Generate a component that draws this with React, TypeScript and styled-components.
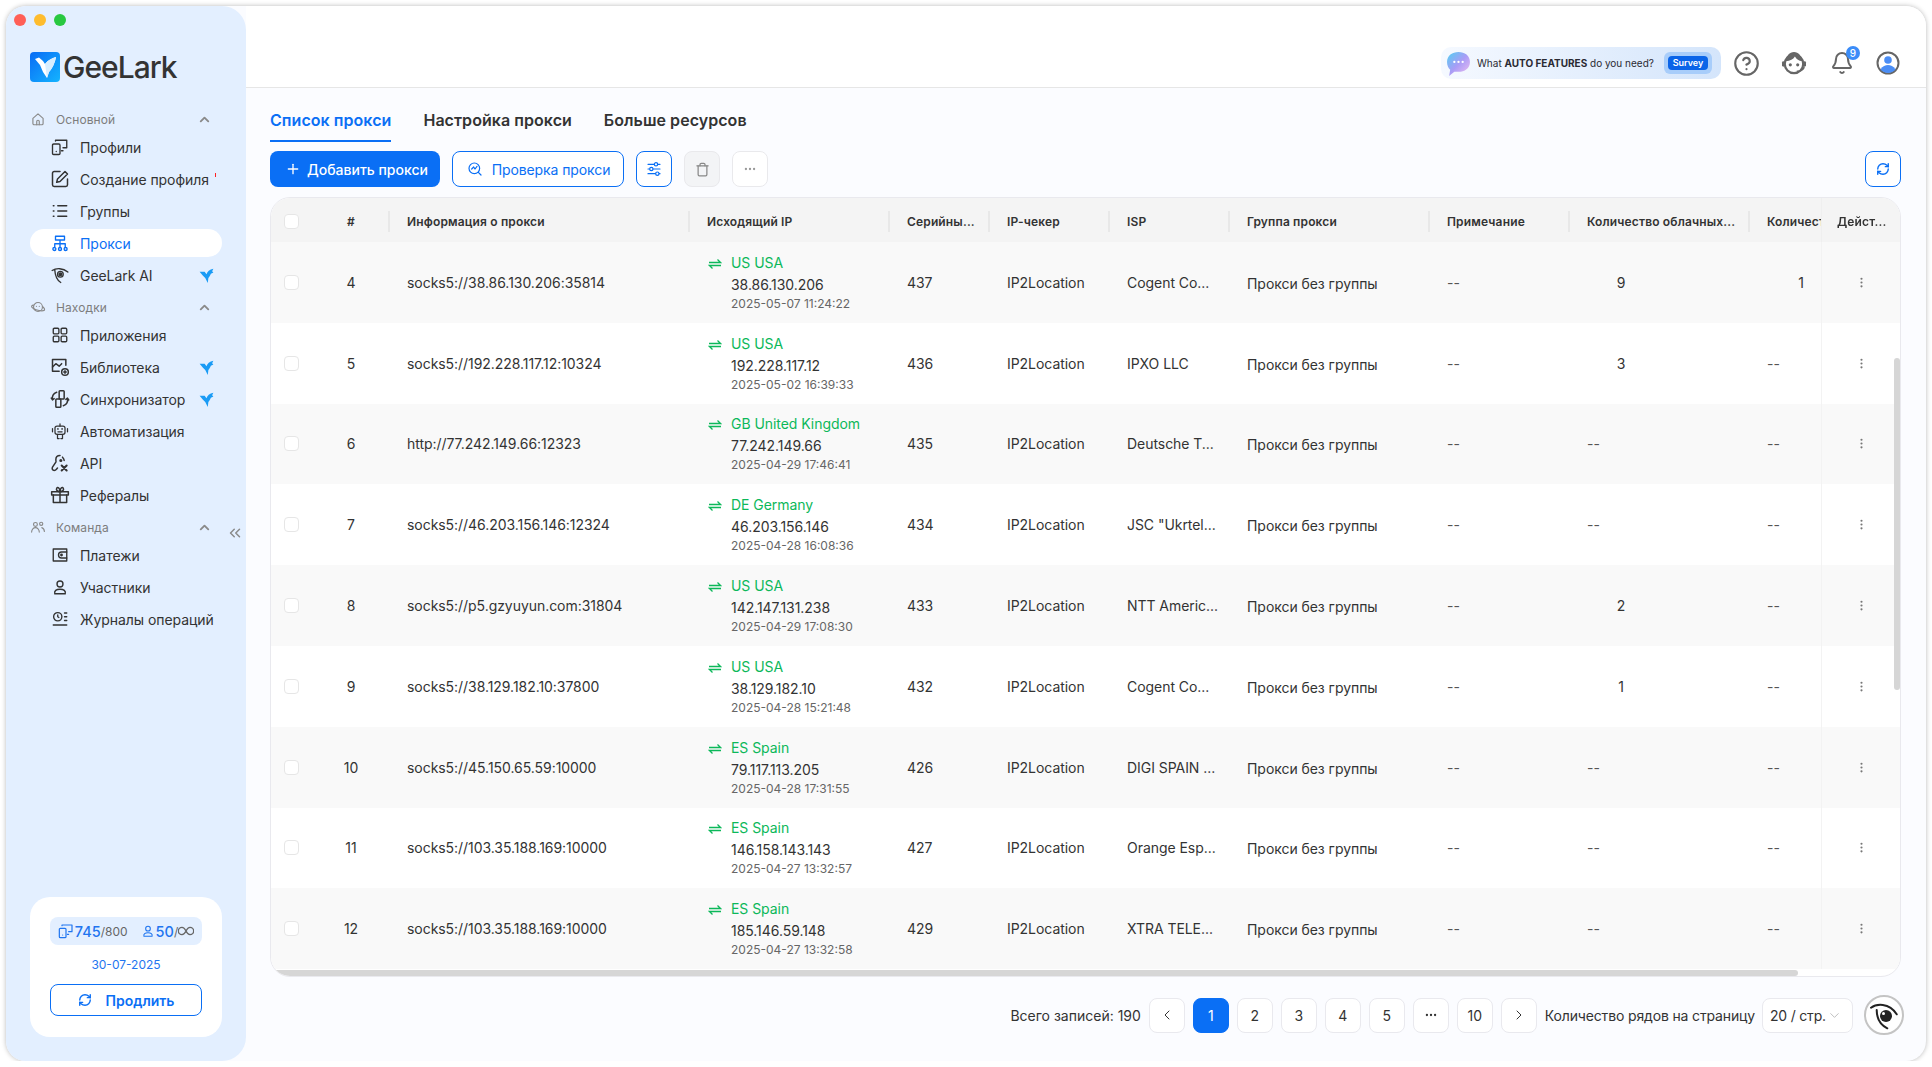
import React from "react";
import styled, { createGlobalStyle } from "styled-components";
import { ChevronLeft, ChevronRight, ChevronDown, ChevronUp, ChevronsLeft, CircleHelp, Bell, Ellipsis, EllipsisVertical, Plus, RefreshCw, Trash } from "lucide-react";

const GlobalStyle = createGlobalStyle`
  html, body {
    margin: 0;
    padding: 0;
    background: #fff;
    font-family: Inter, "Noto Sans", sans-serif;
    color: #333;
  }
  * { box-sizing: border-box; }
`;

type IconProps = { size?: number };

const Stroke = ({ size = 18, children }: IconProps & { children: React.ReactNode }) => (
  <svg width={size} height={size} viewBox="0 0 24 24" fill="none" stroke="currentColor" strokeWidth={1.8} strokeLinecap="round" strokeLinejoin="round">
    {children}
  </svg>
);

const Bird = ({ size = 15 }: IconProps) => (
  <svg width={size} height={size} viewBox="0 0 24 24" fill="#1a9bf5">
    <path d="M1 6h8l3 4c1-4 5-8 11-9l-2 4 2 2-4 2c-1 3-3 5-4 7l-1 8-4-8-4-4z" />
  </svg>
);

const HomeIcon = () => <Stroke><path d="M4 11l8-7 8 7v8a2 2 0 0 1-2 2H6a2 2 0 0 1-2-2z" /><path d="M10 21v-5a2 2 0 0 1 4 0v5" /></Stroke>;
const DevicesIcon = ({ size = 18 }: IconProps) => <Stroke size={size}><rect x="2" y="8" width="10" height="14" rx="1.500" /><path d="M6 4V3h15v10h-5M14 17h2" /><path d="M7 18h.01" /></Stroke>;
const EditIcon = () => <Stroke size={20}><path d="M12 3H5a2 2 0 0 0-2 2v14a2 2 0 0 0 2 2h14a2 2 0 0 0 2-2v-7" /><path d="M18 3l3 3-9 9-4 1 1-4z" /></Stroke>;
const ListIcon = () => <Stroke><path d="M9 5h12M9 12h12M9 19h12" /><path d="M3 5h2M3 12h2M3 19h2" strokeDasharray="1 1.500" /></Stroke>;
const ProxyIcon = () => <Stroke><path d="M6 3h12v5H6zM12 8v5M5 17v-4h14v4" /><circle cx="4.500" cy="20" r="2" /><circle cx="12" cy="20" r="2" /><circle cx="19.500" cy="20" r="2" /><path d="M12 13v5" /></Stroke>;
const EyeBirdIcon = () => <Stroke><path d="M1.500 6C7 2.500 16 2.500 22.500 8M5 5c.5 8 3 14 8 17" /><circle cx="12.500" cy="11" r="3.800" /><circle cx="12.500" cy="11" r="1.800" fill="currentColor" /></Stroke>;
const PlanetIcon = () => <Stroke><circle cx="12" cy="12" r="7" /><path d="M5 9C2 9 1 11 3 13s9 5 15 5 5-3 2-6" /><path d="M9.500 11h.01M14 11h.01" /></Stroke>;
const GridIcon = () => <Stroke><rect x="3" y="3" width="7.500" height="7.500" rx="1.500" /><rect x="13.500" y="3" width="7.500" height="7.500" rx="1.500" /><rect x="3" y="13.500" width="7.500" height="7.500" rx="1.500" /><rect x="13.500" y="13.500" width="7.500" height="7.500" rx="1.500" /></Stroke>;
const LibraryIcon = () => <Stroke size={20}><path d="M11 17H3V3h16v7" /><path d="M3 12l4-4 4 3 3-3" /><circle cx="18" cy="18" r="4" /><path d="M18 16.500v3M16.500 18h3" /></Stroke>;
const SyncIcon = () => <Stroke size={20}><rect x="11" y="2" width="6" height="10" rx="1" /><rect x="7" y="12" width="6" height="10" rx="1" /><path d="M8 4C4 5 2 9 3 13M16 20c4-1 6-5 5-9M3 13l-1.500-2M3 13l2-1.500M21 11l-2 1.500M21 11l1.500 2" /></Stroke>;
const RobotIcon = () => (
  <svg width="20" height="20" viewBox="0 0 24 24" fill="none" stroke="currentColor" strokeWidth="1.500" strokeLinecap="round" strokeLinejoin="round">
    <rect x="6" y="6" width="12" height="10" rx="2.500" />
    <path d="M12 6V3.500M3 9v4M21 9v4M9 16v5h2M15 16v5h-2M9.500 13h5" />
    <path d="M9.500 9.500h.01M14.500 9.500h.01" strokeWidth="2" />
  </svg>
);
const ApiIcon = () => <Stroke size={20}><path d="M12 3c-3 0-5 2-5 5 0 1 .5 2 0 3l-4 6c-1 2 0 4 2 4s3-2 4-3M15 5c1 1 2 2 2 4" /><path d="M14 15l6 6M20 15l-6 6" strokeWidth="2.400" /><circle cx="13" cy="9" r="1" /></Stroke>;
const GiftIcon = () => <Stroke size={20}><rect x="2" y="8" width="20" height="4" /><path d="M4 12v9h16v-9M12 8v13M12 8C9 8 7 6 8 4s4-1 4 4c0-5 3-6 4-4s-1 4-4 4" /></Stroke>;
const TeamIcon = () => <Stroke><circle cx="8" cy="8" r="3" /><path d="M2 20c0-4 3-7 6-7s6 3 6 7" /><circle cx="17" cy="7" r="2.500" /><path d="M18 13c2.500 1 4 3 4 6" /></Stroke>;
const WalletIcon = () => <Stroke><path d="M3 4h18v16H3z" /><path d="M21 8h-7a4 4 0 0 0 0 8h7" /><circle cx="14" cy="12" r="1" /></Stroke>;
const UserIcon = ({ size = 18 }: IconProps) => <Stroke size={size}><circle cx="12" cy="8" r="4" /><path d="M5 21c-1-4 2-6 7-6s8 2 7 6z" /></Stroke>;
const LogsIcon = () => <Stroke><circle cx="9" cy="9" r="5.500" /><path d="M9 6.500V9l1.500 1M18 4h3M18 9h3M18 14h3M3 20h18" /></Stroke>;
const ChartSearchIcon = () => <Stroke size={16}><circle cx="11" cy="11" r="8" /><path d="M17 17l4 4M7 12l3-3 2 3 3-4" /></Stroke>;
const FilterIcon = () => (
  <svg width="16" height="16" viewBox="0 0 24 24" fill="none" stroke="currentColor" strokeWidth="1.800" strokeLinecap="round">
    <path d="M3 5h9M18 5h3M3 12h2M11 12h10M3 19h11M20 19h1" />
    <circle cx="15" cy="5" r="2.500" /><circle cx="8" cy="12" r="2.500" /><circle cx="17" cy="19" r="2.500" />
  </svg>
);
const InfinityIcon = () => <svg width="16" height="10" viewBox="0 0 24 14" fill="none" stroke="currentColor" strokeWidth="2"><path d="M12 7C10 3 8 1.500 6 1.500a5.500 5.500 0 0 0 0 11c2 0 4-1.500 6-5.500s4-5.500 6-5.500a5.500 5.500 0 0 1 0 11c-2 0-4-1.500-6-5.500z" /></svg>;
const SwapIcon = () => <svg width="14" height="12" viewBox="0 0 14 12" fill="none" stroke="currentColor" strokeWidth="1.300"><path d="M1 4.500h11.500L9.500 1.500M13 7.500H1.500l3 3" /></svg>;
const SupportIcon = () => (
  <svg width="26" height="24" viewBox="0 0 28 26" fill="none">
    <ellipse cx="14" cy="14" rx="10" ry="10" fill="#fff" stroke="#666" strokeWidth="2.400" />
    <path d="M5 11c5 0 8-2 10-5 2 3 4 5 8 5-1-6-4-10-9-10S6 5 5 11z" fill="#666" />
    <circle cx="10" cy="15" r="1.700" fill="#666" /><circle cx="18" cy="15" r="1.700" fill="#666" />
    <rect x="1" y="11" width="3" height="6" rx="1.500" fill="#666" /><rect x="24" y="11" width="3" height="6" rx="1.500" fill="#666" />
    <path d="M25 17c0 3-4 5-8 5" stroke="#666" strokeWidth="1.600" />
  </svg>
);
const ProfileIcon = () => (
  <svg width="24" height="24" viewBox="0 0 24 24" fill="none">
    <circle cx="12" cy="12" r="10.500" stroke="#666" strokeWidth="2" />
    <circle cx="12" cy="9" r="3.800" fill="#4a8df5" />
    <path d="M4.500 18.500c2-3.500 5-4.500 7.500-4.500s5.500 1 7.500 4.500A10 10 0 0 1 12 22a10 10 0 0 1-7.500-3.500z" fill="#4a8df5" />
  </svg>
);
const ChatIcon = () => (
  <svg width="25" height="25" viewBox="0 0 24 24">
    <defs>
      <linearGradient id="chatfill" x1="0" y1="0" x2="1" y2="1">
        <stop offset="0" stopColor="#52d0f2" />
        <stop offset=".5" stopColor="#a99cf6" />
        <stop offset="1" stopColor="#f2bff0" />
      </linearGradient>
    </defs>
    <path d="M12 1c6 0 11 3.500 11 9.500S18 20 12 20H8l-5 4 1-6C2 16 1 13.500 1 10.500 1 4.500 6 1 12 1z" fill="url(#chatfill)" />
    <circle cx="8" cy="10.500" r="1.100" fill="#fff" /><circle cx="12" cy="10.500" r="1.100" fill="#fff" /><circle cx="16" cy="10.500" r="1.100" fill="#fff" />
  </svg>
);
const LogoMark = () => (
  <svg width="30" height="30" viewBox="0 0 30 30">
    <defs>
      <linearGradient id="logofill" x1="0" y1="0" x2="1" y2="1">
        <stop offset="0" stopColor="#0a6cf5" />
        <stop offset="1" stopColor="#14b4ff" />
      </linearGradient>
    </defs>
    <rect width="30" height="30" rx="4" fill="url(#logofill)" />
    <path d="M5 7l4-1.500L13 9l2 3c3-4 7-6 11-7-1 6-4 12-7 15l-2 6-4-6-3-7z" fill="#fff" />
    <path d="M15 12c3-4 7-6 11-7-1 6-4 12-7 15l-2 6z" fill="#d8eeff" />
  </svg>
);
const EyeMark = () => (
  <svg width="30" height="30" viewBox="0 0 30 30" fill="none" stroke="#222" strokeWidth="2" strokeLinecap="round">
    <path d="M2 7.700C7 4 20 2 27.700 14.300M7.700 10c0 8 4 15 10.600 18.300" />
    <circle cx="17" cy="16" r="6" fill="#222" stroke="none" />
    <circle cx="14.500" cy="13.500" r="1.500" fill="#fff" stroke="none" />
  </svg>
);

const sections = [
  {
    title: "Основной",
    icon: <HomeIcon />,
    items: [
      { label: "Профили", icon: <DevicesIcon /> },
      { label: "Создание профиля", icon: <EditIcon />, dot: true },
      { label: "Группы", icon: <ListIcon /> },
      { label: "Прокси", icon: <ProxyIcon />, active: true },
      { label: "GeeLark AI", icon: <EyeBirdIcon />, bird: true },
    ],
  },
  {
    title: "Находки",
    icon: <PlanetIcon />,
    items: [
      { label: "Приложения", icon: <GridIcon /> },
      { label: "Библиотека", icon: <LibraryIcon />, bird: true },
      { label: "Синхронизатор", icon: <SyncIcon />, bird: true },
      { label: "Автоматизация", icon: <RobotIcon /> },
      { label: "API", icon: <ApiIcon /> },
      { label: "Рефералы", icon: <GiftIcon /> },
    ],
  },
  {
    title: "Команда",
    icon: <TeamIcon />,
    items: [
      { label: "Платежи", icon: <WalletIcon /> },
      { label: "Участники", icon: <UserIcon /> },
      { label: "Журналы операций", icon: <LogsIcon /> },
    ],
  },
];

const columns = ["Информация о прокси", "Исходящий IP", "Серийны...", "IP-чекер", "ISP", "Группа прокси", "Примечание", "Количество облачных...", "Количест"];

const rows = [
  { n: 4, proxy: "socks5://38.86.130.206:35814", country: "US USA", ip: "38.86.130.206", date: "2025-05-07 11:24:22", serial: 437, isp: "Cogent Co...", cloud: "9", other: "1" },
  { n: 5, proxy: "socks5://192.228.117.12:10324", country: "US USA", ip: "192.228.117.12", date: "2025-05-02 16:39:33", serial: 436, isp: "IPXO LLC", cloud: "3", other: "--" },
  { n: 6, proxy: "http://77.242.149.66:12323", country: "GB United Kingdom", ip: "77.242.149.66", date: "2025-04-29 17:46:41", serial: 435, isp: "Deutsche T...", cloud: "--", other: "--" },
  { n: 7, proxy: "socks5://46.203.156.146:12324", country: "DE Germany", ip: "46.203.156.146", date: "2025-04-28 16:08:36", serial: 434, isp: 'JSC "Ukrtel...', cloud: "--", other: "--" },
  { n: 8, proxy: "socks5://p5.gzyuyun.com:31804", country: "US USA", ip: "142.147.131.238", date: "2025-04-29 17:08:30", serial: 433, isp: "NTT Americ...", cloud: "2", other: "--" },
  { n: 9, proxy: "socks5://38.129.182.10:37800", country: "US USA", ip: "38.129.182.10", date: "2025-04-28 15:21:48", serial: 432, isp: "Cogent Co...", cloud: "1", other: "--" },
  { n: 10, proxy: "socks5://45.150.65.59:10000", country: "ES Spain", ip: "79.117.113.205", date: "2025-04-28 17:31:55", serial: 426, isp: "DIGI SPAIN ...", cloud: "--", other: "--" },
  { n: 11, proxy: "socks5://103.35.188.169:10000", country: "ES Spain", ip: "146.158.143.143", date: "2025-04-27 13:32:57", serial: 427, isp: "Orange Esp...", cloud: "--", other: "--" },
  { n: 12, proxy: "socks5://103.35.188.169:10000", country: "ES Spain", ip: "185.146.59.148", date: "2025-04-27 13:32:58", serial: 429, isp: "XTRA TELE...", cloud: "--", other: "--" },
];

const pages = ["1", "2", "3", "4", "5"];

export default function App() {
  return (
    <>
      <GlobalStyle />
      <Window>
        <Sidebar>
          <Lights>
            <Light $color="#ff5f57" />
            <Light $color="#febc2e" />
            <Light $color="#28c840" />
          </Lights>
          <Logo>
            <LogoMark />
            <LogoText>GeeLark</LogoText>
          </Logo>
          <Nav>
            {sections.map((section) => (
              <NavSection key={section.title}>
                <SectionHead>
                  <SectionIcon>{section.icon}</SectionIcon>
                  <SectionTitle>{section.title}</SectionTitle>
                  <ChevronUp size={15} strokeWidth={3} />
                </SectionHead>
                {section.items.map((item: any) => (
                  <NavItem key={item.label} $active={item.active}>
                    <NavIcon>{item.icon}</NavIcon>
                    <NavLabel>{item.label}</NavLabel>
                    {item.dot && <RedTick />}
                    {item.bird && <BirdSlot><Bird /></BirdSlot>}
                  </NavItem>
                ))}
              </NavSection>
            ))}
          </Nav>
          <Collapse><ChevronsLeft size={18} /></Collapse>
          <PlanCard>
            <QuotaChip>
              <QuotaPart>
                <DevicesIcon size={16} />
                <QuotaNum>745</QuotaNum>/800
              </QuotaPart>
              <QuotaPart>
                <UserIcon size={14} />
                <QuotaNum>50</QuotaNum>/<InfinityIcon />
              </QuotaPart>
            </QuotaChip>
            <PlanDate>30-07-2025</PlanDate>
            <RenewButton>
              <RefreshCw size={14} strokeWidth={2.4} />
              Продлить
            </RenewButton>
          </PlanCard>
        </Sidebar>

        <Main>
          <TopBar>
            <SurveyBanner>
              <ChatIcon />
              <SurveyText>What <b>AUTO FEATURES</b> do you need?</SurveyText>
              <SurveyGlow><SurveyButton>Survey</SurveyButton></SurveyGlow>
            </SurveyBanner>
            <TopIcon $left={12}><CircleHelp size={27} strokeWidth={1.900} /></TopIcon>
            <TopIcon $left={21}><SupportIcon /></TopIcon>
            <TopIcon $left={23}>
              <Bell size={24} strokeWidth={2} />
              <BellBadge>9</BellBadge>
            </TopIcon>
            <TopIcon $left={22}><ProfileIcon /></TopIcon>
          </TopBar>

          <Content>
            <Tabs>
              <Tab $active>Список прокси</Tab>
              <Tab>Настройка прокси</Tab>
              <Tab>Больше ресурсов</Tab>
            </Tabs>

            <Toolbar>
              <PrimaryButton><Plus size={16} strokeWidth={2} />Добавить прокси</PrimaryButton>
              <OutlineButton><ChartSearchIcon />Проверка прокси</OutlineButton>
              <SquareButton><FilterIcon /></SquareButton>
              <SquareButton $muted><Trash size={15} /></SquareButton>
              <SquareButton $plain><Ellipsis size={14} /></SquareButton>
              <RefreshButton><RefreshCw size={14} strokeWidth={2.4} /></RefreshButton>
            </Toolbar>

            <TableWrap>
              <TableScroll>
                <HeadRow>
                  <HeadCell $center><Check /></HeadCell>
                  <HeadCell $center $sep>#</HeadCell>
                  {columns.map((c, i) => (
                    <HeadCell key={c} $sep={i < columns.length - 1}>{c}</HeadCell>
                  ))}
                  <ActionHead>Дейст...</ActionHead>
                </HeadRow>
                <Body>
                  {rows.map((r, i) => (
                    <Row key={r.n} $shaded={i % 2 === 0}>
                      <Cell $center><Check /></Cell>
                      <Cell $center>{r.n}</Cell>
                      <Cell>{r.proxy}</Cell>
                      <Cell>
                        <IpBlock>
                          <SwapSlot><SwapIcon /></SwapSlot>
                          <div>
                            <Country>{r.country}</Country>
                            <IpText>{r.ip}</IpText>
                            <DateText>{r.date}</DateText>
                          </div>
                        </IpBlock>
                      </Cell>
                      <Cell>{r.serial}</Cell>
                      <Cell>IP2Location</Cell>
                      <Cell>{r.isp}</Cell>
                      <GroupCell>Прокси без группы</GroupCell>
                      <Cell><Dash>--</Dash></Cell>
                      <Cell>{r.cloud === "--" ? <Dash>--</Dash> : <Count>{r.cloud}</Count>}</Cell>
                      <Cell>{r.other === "--" ? <Dash>--</Dash> : <Count>{r.other}</Count>}</Cell>
                      <ActionCell $shaded={i % 2 === 0}><EllipsisVertical size={13} /></ActionCell>
                    </Row>
                  ))}
                </Body>
              </TableScroll>
              <HScroll />
              <VScroll />
            </TableWrap>

            <Pager>
              <PagerText>Всего записей: 190</PagerText>
              <PageButton><ChevronLeft size={16} strokeWidth={1.500} /></PageButton>
              {pages.map((p) => (
                <PageButton key={p} $active={p === "1"}>{p}</PageButton>
              ))}
              <PageButton><Ellipsis size={14} /></PageButton>
              <PageButton>10</PageButton>
              <PageButton><ChevronRight size={16} strokeWidth={1.500} /></PageButton>
              <SizeLabel>Количество рядов на страницу</SizeLabel>
              <PageSelect>20 / стр.<ChevronDown size={15} strokeWidth={1.500} color="#bbb" /></PageSelect>
              <AvatarRound><EyeMark /></AvatarRound>
            </Pager>
          </Content>
        </Main>
      </Window>
    </>
  );
}

const Window = styled.div`
  position: relative;
  display: flex;
  width: 1920px;
  height: 1055px;
  margin: 6px 0 0 6px;
  background: #fbfcff;
  border-radius: 20px;
  box-shadow: 0 0 5px rgba(0, 0, 0, 0.28);
  overflow: hidden;
`;

const Sidebar = styled.aside`
  position: relative;
  display: flex;
  flex-direction: column;
  flex: 0 0 240px;
  padding: 0 24px 24px;
  background: #e3efff;
  border-radius: 0 24px 24px 0;
`;

const Lights = styled.div`
  display: flex;
  gap: 8px;
  margin: 8px 0 0 -16px;
`;

const Light = styled.span<{ $color: string }>`
  width: 12px;
  height: 12px;
  border-radius: 50%;
  background: ${(p) => p.$color};
`;

const Logo = styled.div`
  display: flex;
  align-items: center;
  gap: 3px;
  margin-top: 26px;
`;

const LogoText = styled.span`
  font-size: 30px;
  font-weight: 500;
  letter-spacing: -1px;
  line-height: 30px;
  color: #333;
`;

const Nav = styled.nav`
  display: flex;
  flex-direction: column;
  margin-top: 23px;
`;

const NavSection = styled.div`
  display: flex;
  flex-direction: column;
`;

const SectionHead = styled.div`
  display: flex;
  align-items: center;
  height: 28px;
  padding-right: 10px;
  color: #8a8a8a;
`;

const SectionIcon = styled.span`
  display: flex;
  width: 20px;
  justify-content: center;
  margin: 0 8px 0 -2px;
  transform: scale(0.85);
`;

const SectionTitle = styled.span`
  flex: 1;
  font-size: 12px;
  letter-spacing: 0.1px;
  color: #7d7d7d;
`;

const NavItem = styled.div<{ $active?: boolean }>`
  display: flex;
  align-items: center;
  height: 28px;
  margin-bottom: 4px;
  padding-left: 20px;
  border-radius: 14px;
  background: ${(p) => (p.$active ? "#fff" : "transparent")};
  color: ${(p) => (p.$active ? "#0a6ff5" : "#333")};
`;

const NavIcon = styled.span`
  display: flex;
  justify-content: center;
  width: 20px;
  margin-right: 10px;
`;

const NavLabel = styled.span`
  flex: 1;
  font-size: 14px;
  letter-spacing: -0.05px;
  white-space: nowrap;
`;

const RedTick = styled.i`
  width: 1px;
  height: 4px;
  margin: -8px 6px 0 0;
  background: #f22;
`;

const BirdSlot = styled.span`
  display: flex;
  padding-right: 8px;
`;

const Collapse = styled.button`
  position: absolute;
  top: 518px;
  left: 220px;
  display: flex;
  padding: 0;
  border: 0;
  background: none;
  color: #8a8a8a;
`;

const PlanCard = styled.div`
  display: flex;
  flex-direction: column;
  align-items: center;
  margin-top: auto;
  padding: 20px;
  height: 140px;
  background: #fff;
  border-radius: 20px;
`;

const QuotaChip = styled.div`
  display: flex;
  align-items: center;
  justify-content: center;
  gap: 13px;
  width: 152px;
  height: 28px;
  background: #e3efff;
  border-radius: 8px;
  font-size: 12px;
  color: #666;
`;

const QuotaPart = styled.span`
  display: flex;
  align-items: center;
  color: #666;
  & > svg:first-child {
    color: #1f75f0;
    margin-right: 1px;
  }
`;

const QuotaNum = styled.span`
  font-size: 14.500px;
  font-weight: 500;
  color: #1f75f0;
`;

const PlanDate = styled.div`
  margin-top: 11px;
  font-size: 12px;
  line-height: 18px;
  color: #1f75f0;
`;

const RenewButton = styled.button`
  display: flex;
  align-items: center;
  justify-content: center;
  gap: 14px;
  width: 152px;
  height: 32px;
  margin-top: 10px;
  background: #fff;
  border: 1px solid #0a6ff5;
  border-radius: 8px;
  font: 600 14px Inter, sans-serif;
  color: #0a6ff5;
`;

const Main = styled.main`
  display: flex;
  flex-direction: column;
  flex: 1;
  min-width: 0;
`;

const TopBar = styled.header`
  display: flex;
  align-items: center;
  justify-content: flex-end;
  flex: 0 0 82px;
  padding: 33px 26px 0 0;
  background: #fff;
  border-bottom: 1px solid #e6e6e6;
`;

const SurveyBanner = styled.div`
  display: flex;
  align-items: center;
  width: 280px;
  height: 32px;
  padding: 0 9px 0 5px;
  border-radius: 10px;
  background: linear-gradient(90deg, #f5f9ff, #d4e5fb);
`;

const SurveyText = styled.span`
  flex: 1;
  margin-left: 6px;
  font-size: 10px;
  white-space: nowrap;
  color: #2a2a33;
  b { font-weight: 700; }
`;

const SurveyGlow = styled.span`
  display: flex;
  padding: 4px;
  background: #a8cdfa;
  border-radius: 6px;
`;

const SurveyButton = styled.span`
  width: 40px;
  height: 14px;
  line-height: 14px;
  text-align: center;
  background: #0a64e8;
  border-radius: 4px;
  font-size: 9px;
  font-weight: 600;
  color: #fff;
`;

const TopIcon = styled.span<{ $left: number }>`
  position: relative;
  display: flex;
  margin-left: ${(p) => p.$left}px;
  color: #666;
`;

const BellBadge = styled.b`
  position: absolute;
  top: -5px;
  right: -6px;
  width: 14px;
  height: 14px;
  border-radius: 50%;
  background: #3b8cf8;
  font-size: 10px;
  font-weight: 500;
  line-height: 14px;
  text-align: center;
  color: #fff;
`;

const Content = styled.div`
  display: flex;
  flex-direction: column;
  flex: 1;
  min-height: 0;
  padding: 0 25px 0 24px;
`;

const Tabs = styled.div`
  display: flex;
  gap: 32px;
  height: 54px;
  padding-top: 20px;
`;

const Tab = styled.div<{ $active?: boolean }>`
  height: 34px;
  border-bottom: 2px solid ${(p) => (p.$active ? "#0a6ff5" : "transparent")};
  font-size: 16px;
  font-weight: 600;
  letter-spacing: 0.05px;
  line-height: 24px;
  color: ${(p) => (p.$active ? "#0a6ff5" : "#333")};
`;

const Toolbar = styled.div`
  display: flex;
  align-items: center;
  gap: 12px;
  height: 36px;
  margin-top: 9px;
`;

const PrimaryButton = styled.button`
  display: flex;
  align-items: center;
  justify-content: center;
  gap: 6px;
  width: 170px;
  height: 36px;
  padding: 0 0 0 3px;
  background: #0a6ff5;
  border: 0;
  border-radius: 8px;
  font: 500 14px Inter, sans-serif;
  color: #fff;
`;

const OutlineButton = styled(PrimaryButton)`
  width: 172px;
  gap: 9px;
  padding: 0 0 0 1px;
  background: #fff;
  border: 1px solid #0a6ff5;
  font-weight: 400;
  letter-spacing: -0.1px;
  color: #0a6ff5;
`;

const SquareButton = styled.button<{ $muted?: boolean; $plain?: boolean }>`
  display: flex;
  align-items: center;
  justify-content: center;
  width: 36px;
  height: 36px;
  padding: 0;
  border-radius: 8px;
  background: ${(p) => (p.$muted ? "#f3f4f6" : "#fff")};
  border: 1px solid ${(p) => (p.$muted || p.$plain ? "#e9e9ec" : "#0a6ff5")};
  color: ${(p) => (p.$muted ? "#888" : p.$plain ? "#999" : "#0a6ff5")};
`;

const RefreshButton = styled(SquareButton)`
  margin-left: auto;
`;

const TableWrap = styled.div`
  position: relative;
  height: 780px;
  margin-top: 10px;
  border: 1px solid #e9e9ee;
  border-radius: 20px;
  background: #fff;
  overflow: hidden;
`;

const TableScroll = styled.div`
  height: 100%;
  overflow: hidden;
`;

const gridColumns = "41px 78px 300px 200px 100px 120px 120px 200px 140px 180px 180px 78px";

const HeadRow = styled.div`
  display: grid;
  grid-template-columns: ${gridColumns};
  width: max-content;
  height: 48px;
  padding-bottom: 1px;
  background: #f4f4f4;
`;

const HeadCell = styled.div<{ $center?: boolean; $sep?: boolean }>`
  position: relative;
  display: flex;
  align-items: center;
  justify-content: ${(p) => (p.$center ? "center" : "flex-start")};
  padding: ${(p) => (p.$center ? "0" : "0 17px")};
  font-size: 12px;
  font-weight: 600;
  letter-spacing: 0.15px;
  white-space: nowrap;
  overflow: hidden;
  color: #333;
  &::after {
    content: "";
    display: ${(p) => (p.$sep ? "block" : "none")};
    position: absolute;
    right: 0;
    top: 13px;
    width: 2px;
    height: 21px;
    background: #e8e8e8;
  }
`;

const ActionHead = styled(HeadCell)`
  position: sticky;
  right: 0;
  padding: 0 0 0 15px;
  background: #f4f4f4;
  box-shadow: -1px 0 0 #efefef;
`;

const Body = styled.div`
  height: 730px;
  margin-top: -4px;
`;

const Row = styled.div<{ $shaded: boolean }>`
  display: grid;
  grid-template-columns: ${gridColumns};
  width: max-content;
  height: 80.8px;
  background: ${(p) => (p.$shaded ? "#f9f9f9" : "#fff")};
`;

const Cell = styled.div<{ $center?: boolean }>`
  display: flex;
  align-items: center;
  justify-content: ${(p) => (p.$center ? "center" : "flex-start")};
  padding: ${(p) => (p.$center ? "0" : "0 17px")};
  font-size: 14px;
  letter-spacing: -0.05px;
  white-space: nowrap;
  overflow: hidden;
  color: #333;
`;

const GroupCell = styled(Cell)`
  padding-top: 2px;
`;

const ActionCell = styled.div<{ $shaded: boolean }>`
  position: sticky;
  right: 0;
  display: flex;
  align-items: center;
  justify-content: center;
  background: ${(p) => (p.$shaded ? "#f9f9f9" : "#fff")};
  box-shadow: -1px 0 0 #f3f3f3;
  color: #777;
`;

const Check = styled.span`
  width: 15px;
  height: 15px;
  background: #fff;
  border: 1px solid #e6e6e6;
  border-radius: 4px;
`;

const IpBlock = styled.div`
  display: flex;
  align-items: flex-start;
`;

const SwapSlot = styled.span`
  display: flex;
  width: 24px;
  padding: 5px 0 0 1px;
  color: #0cb85a;
`;

const Country = styled.div`
  font-size: 14px;
  line-height: 20px;
  color: #0cb85a;
`;

const IpText = styled.div`
  font-size: 14px;
  line-height: 23px;
`;

const DateText = styled.div`
  font-size: 12px;
  line-height: 16px;
  letter-spacing: 0;
  color: #666;
`;

const Dash = styled.span`
  color: #555;
`;

const Count = styled.span`
  display: block;
  width: 68px;
  text-align: center;
`;

const HScroll = styled.div`
  position: absolute;
  left: 0;
  bottom: 0;
  width: 1527px;
  height: 6px;
  background: #d6d6d6;
  border-radius: 0 3px 3px 0;
`;

const VScroll = styled.div`
  position: absolute;
  top: 160px;
  right: 0;
  width: 6px;
  height: 332px;
  background: #d6d6d6;
  border-radius: 3px;
`;

const Pager = styled.div`
  display: flex;
  align-items: center;
  gap: 8px;
  justify-content: flex-end;
  height: 40px;
  margin-top: 18px;
  margin-right: -3px;
`;

const PagerText = styled.span`
  font-size: 14px;
  white-space: nowrap;
  color: #333;
`;

const SizeLabel = styled(PagerText)`
  margin-right: -1px;
  letter-spacing: -0.15px;
`;

const PageButton = styled.button<{ $active?: boolean }>`
  display: flex;
  align-items: center;
  justify-content: center;
  width: 36px;
  height: 35px;
  padding: 0;
  background: ${(p) => (p.$active ? "#0a6ff5" : "#fff")};
  border: 1px solid ${(p) => (p.$active ? "#0a6ff5" : "#e9e9ee")};
  border-radius: 8px;
  font: 400 14px Inter, sans-serif;
  color: ${(p) => (p.$active ? "#fff" : "#333")};
`;

const PageSelect = styled.div`
  display: flex;
  align-items: center;
  justify-content: space-between;
  width: 91px;
  height: 35px;
  padding: 0 10px 0 7px;
  background: #fff;
  border: 1px solid #e9e9ee;
  border-radius: 8px;
  font-size: 14px;
  letter-spacing: -0.2px;
  white-space: nowrap;
`;

const AvatarRound = styled.div`
  display: flex;
  align-items: center;
  justify-content: center;
  width: 40px;
  height: 40px;
  margin-left: 3px;
  background: #fff;
  border: 2px solid #c4c4c4;
  border-radius: 50%;
`;
